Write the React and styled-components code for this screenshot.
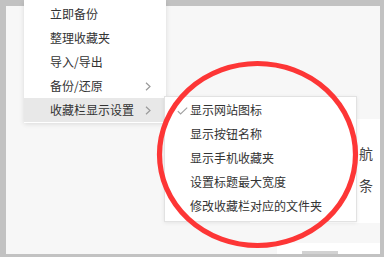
import React from "react";
import styled, { createGlobalStyle } from "styled-components";

const mainItems = [
  { label: "立即备份" },
  { label: "整理收藏夹" },
  { label: "导入/导出" },
  { label: "备份/还原", more: true },
  { label: "收藏栏显示设置", more: true, active: true },
];

const subItems = [
  { label: "显示网站图标", checked: true },
  { label: "显示按钮名称" },
  { label: "显示手机收藏夹" },
  { label: "设置标题最大宽度" },
  { label: "修改收藏栏对应的文件夹" },
];

const Chevron = () => (
  <Arrow width="6" height="9" viewBox="0 0 6 9">
    <polyline points="1,0.8 5,4.5 1,8.2" fill="none" stroke="#9a9a9a" strokeWidth="1.2" />
  </Arrow>
);

const Check = () => (
  <Tick width="11" height="8" viewBox="0 0 11 8">
    <polyline points="0.8,4.2 3.6,7 10.2,0.6" fill="none" stroke="#a0a0a0" strokeWidth="1.1" />
  </Tick>
);

const App = () => (
  <>
    <GlobalStyle />
    <Frame>
      <Canvas>
        <Panel>
          <PanelLine>航</PanelLine>
          <PanelLine>条</PanelLine>
        </Panel>
        <Footer>
          <ScrollTab />
        </Footer>
      </Canvas>

      <Menu>
        {mainItems.map(({ label, more, active }) => (
          <MenuItem key={label} $active={active}>
            {label}
            {more && <Chevron />}
          </MenuItem>
        ))}
      </Menu>

      <SubMenu>
        {subItems.map(({ label, checked }) => (
          <SubItem key={label}>
            {checked && <Check />}
            {label}
          </SubItem>
        ))}
      </SubMenu>

      <Mark width="384" height="257" viewBox="0 0 384 257">
        <ellipse cx="257.5" cy="154.5" rx="98" ry="91" fill="none" stroke="#fd3636" strokeWidth="5.2" />
      </Mark>
    </Frame>
  </>
);

export default App;

const GlobalStyle = createGlobalStyle`
  html, body {
    margin: 0;
    padding: 0;
    width: 384px;
    height: 257px;
    overflow: hidden;
    background: #c2c2c2;
  }
  * {
    box-sizing: border-box;
  }
`;

const Frame = styled.div`
  position: relative;
  width: 384px;
  height: 257px;
  padding: 6px 4px 3px 6px;
  background: #c2c2c2;
  font-family: "Noto Sans CJK SC", "Noto Sans", sans-serif;
`;

const Canvas = styled.div`
  height: 100%;
  display: flex;
  flex-direction: column;
  background: #f7f7f7;
`;

const Panel = styled.div`
  align-self: flex-end;
  width: 130px;
  height: 104px;
  margin-top: 113px;
  padding: 18px 7px 0 0;
  display: flex;
  flex-direction: column;
  align-items: flex-end;
  background: #fff;
`;

const PanelLine = styled.div`
  height: 32px;
  line-height: 32px;
  font-size: 14px;
  color: #444;
`;

const Footer = styled.div`
  align-self: flex-end;
  margin-top: auto;
  width: 103px;
  height: 11px;
  display: flex;
  align-items: flex-end;
  padding-left: 25px;
  background: #fff;
`;

const ScrollTab = styled.div`
  width: 36px;
  height: 3px;
  background: #d2d2d2;
`;

const Menu = styled.div`
  position: absolute;
  left: 24px;
  top: 0;
  width: 142px;
  padding: 2px 0 1px;
  background: #fff;
  box-shadow: 0 1px 5px rgba(0, 0, 0, 0.12);
`;

const MenuItem = styled.div`
  position: relative;
  height: 24px;
  line-height: 24px;
  padding-left: 26px;
  font-size: 12px;
  color: #333;
  background: ${({ $active }) => ($active ? "#e8e8e8" : "transparent")};
`;

const Arrow = styled.svg`
  position: absolute;
  left: 121px;
  top: 8px;
`;

const SubMenu = styled.div`
  position: absolute;
  left: 164px;
  top: 96px;
  width: 193px;
  padding: 1px 0 3px;
  background: #fff;
  border: 1px solid #e2e2e2;
  box-shadow: 0 1px 4px rgba(0, 0, 0, 0.08);
`;

const SubItem = styled.div`
  position: relative;
  height: 24px;
  line-height: 24px;
  padding-left: 25px;
  font-size: 12px;
  color: #333;
`;

const Tick = styled.svg`
  position: absolute;
  left: 12px;
  top: 9px;
`;

const Mark = styled.svg`
  position: absolute;
  left: 0;
  top: 0;
  pointer-events: none;
`;
